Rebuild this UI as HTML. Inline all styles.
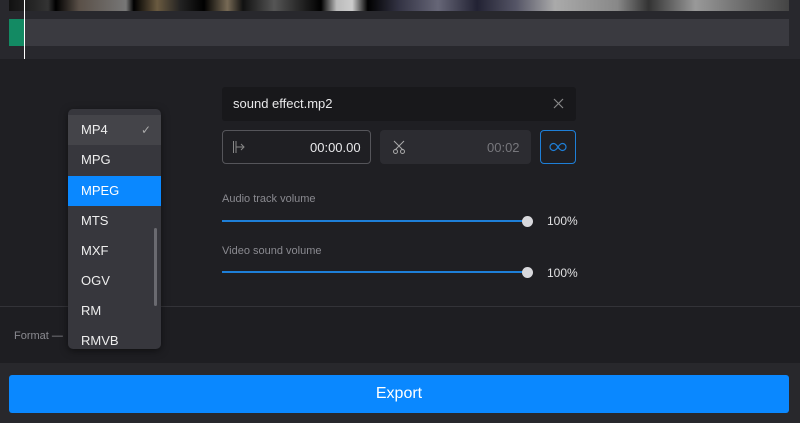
<!DOCTYPE html>
<html><head><meta charset="utf-8"><style>
*{margin:0;padding:0;box-sizing:border-box}
body{width:800px;height:423px;background:#1f1f23;font-family:"Liberation Sans",sans-serif;position:relative;overflow:hidden;color:#fff}
.a{position:absolute}
.thumbs{left:9px;top:0;width:780px;height:11px;background:linear-gradient(90deg,#111 0,#333 5%,#000 6%,#5a5048 9%,#777 15%,#000 16%,#6a5a40 19%,#222 22%,#000 25%,#776a55 28%,#111 30%,#555 34%,#000 40%,#bbb 42%,#ccc 44%,#000 46%,#334 50%,#667 55%,#223 60%,#556 65%,#aaa 70%,#888 78%,#333 82%,#999 88%,#666 95%,#444 100%)}
.item{position:absolute;left:0;width:93px;height:30px;line-height:30px;padding-left:13px;font-size:13px;color:#eee}
.lbl{font-size:11px;color:#8a8a90}
.track{height:2px;background:#1e7fd8;width:305px;left:222px}
.knob{width:11px;height:11px;border-radius:50%;background:#d8d8dc;left:522px}
</style></head><body>
<div class="a" style="left:0;top:0;width:800px;height:59px;background:#28282d"></div>
<div class="a thumbs"></div>
<div class="a" style="left:9px;top:19px;width:780px;height:27px;background:#3a3a40"></div>
<div class="a" style="left:9px;top:19px;width:15px;height:27px;background:#138a63"></div>
<div class="a" style="left:24px;top:0;width:1px;height:59px;background:#fff"></div>

<div class="a" style="left:222px;top:87px;width:354px;height:34px;background:#18181b;border-radius:3px"></div>
<div class="a" style="left:233px;top:96px;font-size:13px;color:#e8e8ea">sound effect.mp2</div>
<svg class="a" style="left:552px;top:97px" width="13" height="13"><path d="M2 2L11 11M11 2L2 11" stroke="#888" stroke-width="1.2"/></svg>

<div class="a" style="left:222px;top:130px;width:149px;height:34px;border:1px solid #55555a;border-radius:4px"></div>
<svg class="a" style="left:232px;top:140px" width="14" height="14"><path d="M1.5 1V13M4 1V13M4 7H12M9 4L12 7L9 10" stroke="#888" stroke-width="1" fill="none"/></svg>
<div class="a" style="left:310px;top:140px;font-size:13px;color:#e8e8ea">00:00.00</div>
<div class="a" style="left:380px;top:130px;width:151px;height:34px;background:#2c2c31;border-radius:4px"></div>
<svg class="a" style="left:392px;top:140px" width="14" height="15"><path d="M2 1L11 10M12 1L3 10" stroke="#aaa" stroke-width="1" fill="none"/><circle cx="3.5" cy="11.5" r="2" stroke="#aaa" fill="none"/><circle cx="10.5" cy="11.5" r="2" stroke="#aaa" fill="none"/></svg>
<div class="a" style="left:487px;top:140px;font-size:13px;color:#77777c">00:02</div>
<div class="a" style="left:540px;top:130px;width:36px;height:34px;border:1px solid #1e7fd8;border-radius:4px"></div>
<svg class="a" style="left:549px;top:142px" width="18" height="10"><path d="M9 5C7 2 6 1.5 4.5 1.5A3.5 3.5 0 0 0 4.5 8.5C6 8.5 7 8 9 5C11 2 12 1.5 13.5 1.5A3.5 3.5 0 0 1 13.5 8.5C12 8.5 11 8 9 5Z" stroke="#1e7fd8" stroke-width="1.2" fill="none"/></svg>

<div class="a lbl" style="left:222px;top:193px">Audio track volume</div>
<div class="a track" style="top:220px"></div>
<div class="a knob" style="top:216px"></div>
<div class="a" style="left:547px;top:214px;font-size:12px;color:#e0e0e2">100%</div>
<div class="a lbl" style="left:222px;top:245px">Video sound volume</div>
<div class="a track" style="top:271px"></div>
<div class="a knob" style="top:267px"></div>
<div class="a" style="left:547px;top:266px;font-size:12px;color:#e0e0e2">100%</div>

<div class="a" style="left:0;top:306px;width:800px;height:1px;background:#333338"></div>
<div class="a" style="left:0;top:307px;width:800px;height:56px;background:#1e1e22"></div>
<div class="a lbl" style="left:14px;top:330px">Format —</div>
<div class="a" style="left:0;top:363px;width:800px;height:60px;background:#28282c"></div>
<div class="a" style="left:9px;top:375px;width:780px;height:38px;background:#0a88ff;border-radius:3px;text-align:center;line-height:38px;font-size:16px;color:#fff">Export</div>

<div class="a" style="left:68px;top:109px;width:93px;height:240px;background:#37373d;border-radius:5px;overflow:hidden;box-shadow:0 2px 8px rgba(0,0,0,.5)">
<div class="item" style="top:6px;background:#444449">MP4<span style="position:absolute;right:10px;color:#aaa;font-size:12px">✓</span></div>
<div class="item" style="top:36px">MPG</div>
<div class="item" style="top:67px;background:#0a88ff;color:#fff">MPEG</div>
<div class="item" style="top:97px">MTS</div>
<div class="item" style="top:127px">MXF</div>
<div class="item" style="top:157px">OGV</div>
<div class="item" style="top:187px">RM</div>
<div class="item" style="top:217px">RMVB</div>
<div class="a" style="left:86px;top:119px;width:3px;height:78px;background:#6a6a70;border-radius:2px"></div>
</div>
</body></html>
